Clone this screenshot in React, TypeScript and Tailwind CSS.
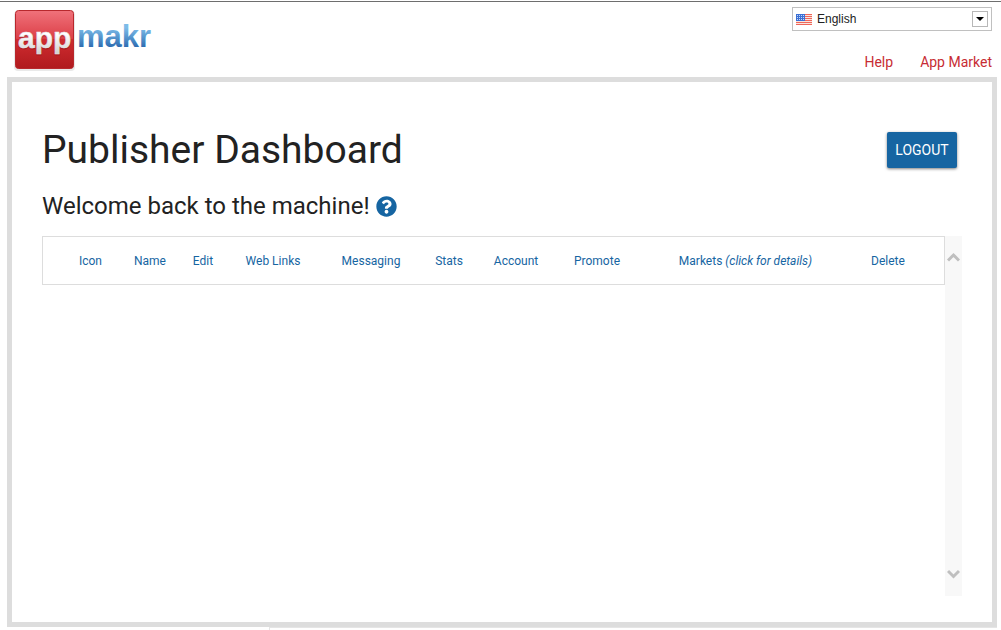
import React from 'react'

const columns = [
  { label: '', width: 'w-[17px]' },
  { label: 'Icon', width: 'w-[61px]' },
  { label: 'Name', width: 'w-[58px]' },
  { label: 'Edit', width: 'w-[48px]' },
  { label: 'Web Links', width: 'w-[92px]' },
  { label: 'Messaging', width: 'w-[104px]' },
  { label: 'Stats', width: 'w-[52px]' },
  { label: 'Account', width: 'w-[82px]' },
  { label: 'Promote', width: 'w-[80px]' },
  { label: 'Markets', note: '(click for details)', width: 'w-[217px]' },
  { label: 'Delete', width: 'w-[68px]' },
  { label: '', width: 'w-[22px]' },
]

const Logo = () => (
  <svg width="142" height="64" viewBox="0 0 142 64" role="img" aria-label="appmakr">
    <defs>
      <linearGradient id="tile" x1="0" y1="0" x2="0" y2="1">
        <stop offset="0" stopColor="#f0727b" />
        <stop offset="0.48" stopColor="#dc4048" />
        <stop offset="0.5" stopColor="#cf2c30" />
        <stop offset="1" stopColor="#b01a1e" />
      </linearGradient>
      <linearGradient id="blue" x1="0" y1="0" x2="0" y2="1">
        <stop offset="0.25" stopColor="#7dbce8" />
        <stop offset="0.85" stopColor="#2766ad" />
      </linearGradient>
      <linearGradient id="silver" x1="0" y1="0" x2="0" y2="1">
        <stop offset="0.4" stopColor="#ffffff" />
        <stop offset="1" stopColor="#cfcfcf" />
      </linearGradient>
    </defs>
    <rect x="4" y="4" width="61" height="60" rx="4" fill="#e9e9e9" />
    <rect x="5.500" y="3.500" width="58" height="58" rx="3" fill="url(#tile)" stroke="#b8282d" strokeWidth="1" />
    <g fontFamily="'Liberation Sans', Arial, sans-serif" fontWeight="700" strokeLinejoin="round">
      <text x="8" y="42" fontSize="30" fill="#8e1418" stroke="#8e1418" strokeWidth="1" opacity="0.5">app</text>
      <text x="8" y="41" fontSize="30" fill="url(#silver)" stroke="#e6e6e6" strokeWidth="0.500">app</text>
      <text x="67" y="40" fontSize="31" fill="url(#blue)">makr</text>
    </g>
  </svg>
)

const Flag = () => (
  <svg width="16" height="11" viewBox="0 0 16 11" aria-hidden="true">
    <rect width="16" height="11" fill="#f9e4dd" />
    <path d="M0 .5h16M0 2.5h16M0 4.5h16M0 6.5h16M0 8.5h16M0 10.5h16" stroke="#f0665a" />
    <rect width="9" height="7" fill="#3b6fd4" />
    <path d="M1 1.5h8M1 3.5h8M1 5.5h8" stroke="#c3d6f7" strokeDasharray="1 1" />
  </svg>
)

const LanguageSelect = () => (
  <div className="relative w-[200px]">
    <select
      aria-label="Language"
      className="block h-6 w-full appearance-none border border-[#c0c0c0] bg-white pl-6 font-['Liberation_Sans',Arial,sans-serif] text-xs leading-5 text-[#222]"
    >
      <option>English</option>
    </select>
    <span className="pointer-events-none absolute inset-y-0 left-1 flex items-center">
      <Flag />
    </span>
    <span className="pointer-events-none absolute inset-y-1 right-1 flex w-4 items-center justify-center border border-[#b8b8b8] bg-white">
      <svg width="8" height="4" viewBox="0 0 8 4" aria-hidden="true">
        <path d="M0 0h8L4 4z" fill="#000" />
      </svg>
    </span>
  </div>
)

const Header = () => (
  <header className="flex justify-between pl-[10px] pr-[9px]">
    <a href="#home" className="pt-[5px]">
      <Logo />
    </a>
    <div className="flex flex-col items-end pt-[5px]">
      <LanguageSelect />
      <nav className="mt-[21px] flex gap-[27px] text-sm leading-5 text-[#c72c33]">
        <a href="#help">Help</a>
        <a href="#market">App Market</a>
      </nav>
    </div>
  </header>
)

const AppsPanel = () => (
  <div className="mt-[14px] flex h-[360px]">
    <div className="flex-1">
      <table className="w-full table-fixed border-separate border-spacing-0 border border-[#dddddd]">
        <thead>
          <tr className="h-[47px] text-xs text-[#1665a2]">
            {columns.map((col, i) => (
              <th key={i} className={`${col.width} p-0 text-center font-normal whitespace-nowrap`}>
                {col.label}
                {col.note && <em> {col.note}</em>}
              </th>
            ))}
          </tr>
        </thead>
      </table>
    </div>
    <div className="flex w-[17px] flex-col items-center justify-between bg-[#f8f8f8] py-4">
      <button aria-label="Scroll up">
        <svg width="13" height="11" viewBox="0 0 13 11" className="block">
          <path d="M1 8.500 6.500 3l5.500 5.500" fill="none" stroke="#bfbfbf" strokeWidth="3" />
        </svg>
      </button>
      <button aria-label="Scroll down">
        <svg width="13" height="11" viewBox="0 0 13 11" className="block">
          <path d="M1 2 6.500 7.500l5.500-5.500" fill="none" stroke="#bfbfbf" strokeWidth="3" />
        </svg>
      </button>
    </div>
  </div>
)

const App = () => {
  return (
    <div className="bg-white pt-px font-[Roboto,sans-serif] text-[#222]">
      <div className="border-t border-[#6e6e6e]">
        <Header />
        <main className="ml-[7px] mr-1 mt-[5px] border-[5px] border-[#dddddd] pb-[26px] pl-[30px] pr-[30px] pt-10">
          <div className="flex items-center justify-between pr-[5px]">
            <h1 className="text-[39px] leading-14">Publisher Dashboard</h1>
            <button className="h-9 min-w-[70px] rounded-xs bg-[#1665a2] px-2 text-sm text-white shadow-[0_1px_3px_rgba(0,0,0,0.5)]">
              LOGOUT
            </button>
          </div>
          <div className="mt-3 flex items-center gap-[6px]">
            <h2 className="text-2xl leading-8">Welcome back to the machine!</h2>
            <button aria-label="Help with the dashboard">
              <svg width="21" height="21" viewBox="0 0 512 512" className="block" fill="#1665a2">
                <path d="M504 256c0 137-111 248-248 248S8 393 8 256 119 8 256 8s248 111 248 248zM262.700 90c-54.500 0-89.300 23-116.500 63.800-3.500 5.300-2.400 12.400 2.700 16.300l34.700 26.300c5.200 3.900 12.600 3 16.700-2.100 17.900-22.700 30.100-35.800 57.300-35.800 20.400 0 45.700 13.100 45.700 33 0 15-12.400 22.700-32.500 34C247.100 238.500 216 254.900 216 296v4c0 6.600 5.400 12 12 12h56c6.600 0 12-5.400 12-12v-1.300c0-28.500 83.200-29.600 83.200-106.700 0-58-60.200-102-116.500-102zM256 338c-25.400 0-46 20.600-46 46s20.600 46 46 46 46-20.600 46-46-20.600-46-46-46z" />
              </svg>
            </button>
          </div>
          <AppsPanel />
        </main>
        <footer className="ml-[269px] mr-1 h-[3px] border-l border-t border-[#e5e5e5]" />
      </div>
    </div>
  )
}

export default App
